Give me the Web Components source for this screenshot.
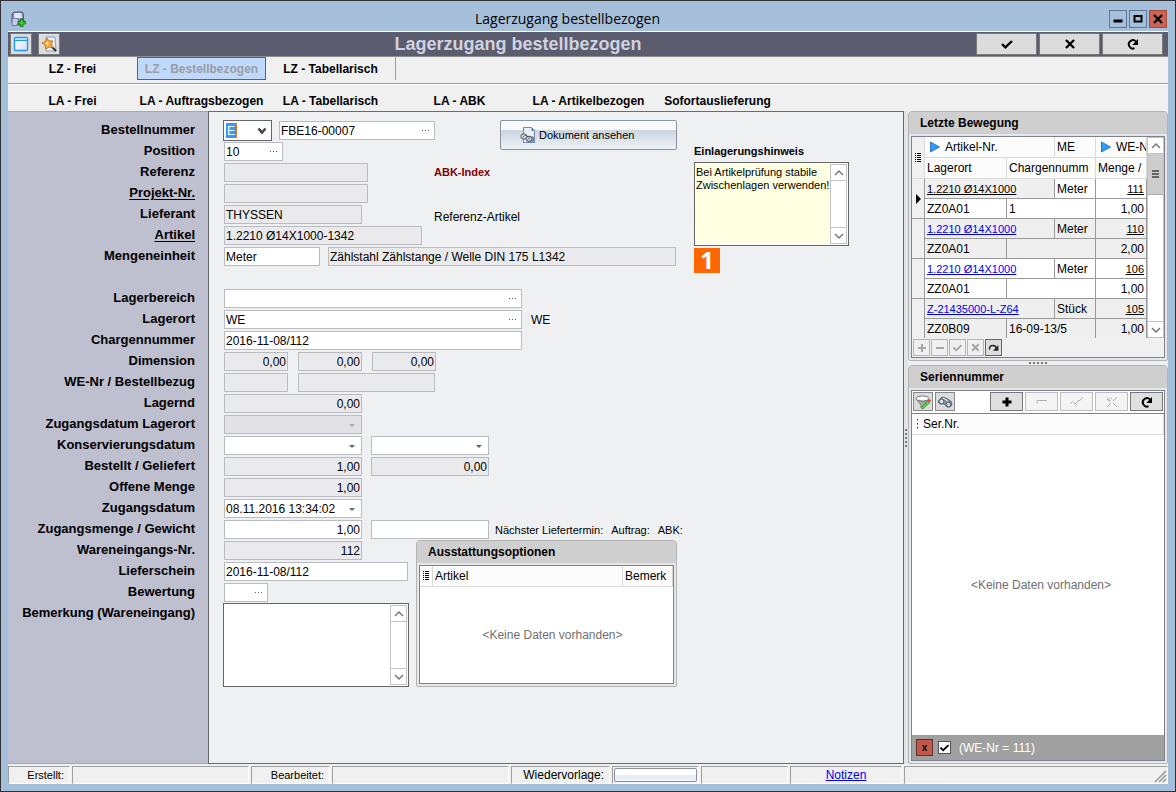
<!DOCTYPE html>
<html lang="de">
<head>
<meta charset="utf-8">
<title>Lagerzugang bestellbezogen</title>
<style>
html, body { margin: 0; height: 100%; }
body { font: 12px/16px "Liberation Sans", Arial, sans-serif; color: #000; }
</style>
</head>
<body>
<wz-window>
  <wz-titlebar></wz-titlebar>
  <wz-toolbar></wz-toolbar>
  <wz-tabs></wz-tabs>
  <wz-main></wz-main>
  <wz-status></wz-status>
</wz-window>

<script>
const base = `*{box-sizing:border-box}button,input,select,textarea{font:inherit;color:inherit;margin:0;padding:0;border:0;background:none;border-radius:0;outline:0}`;
function define(name, html) {
  customElements.define(name, class extends HTMLElement {
    connectedCallback() {
      if (this.shadowRoot) return;
      const root = this.attachShadow({ mode: 'open' });
      const t = document.createElement('template');
      t.innerHTML = typeof html === 'function' ? html(this) : html;
      root.append(t.content.cloneNode(true));
    }
  });
}

/* ---------- icons ---------- */
const icons = {
  app: `<path d="M2 3l2-2h8l1 1 1 9-2 3H4l-2-2z" fill="#8e94bd" stroke="#4f557c"/><path d="M4.500 2h7l.5 5H4z" fill="#e4e8fa"/><path d="M2 8q3-2 6 0l1 4-3 2.500H2z" fill="#c4c9e4" stroke="#666c94" stroke-width=".8"/><path d="M10.500 8h2.500v2.500h2.500v2.500h-2.500v2.500h-2.500v-2.500H8v-2.500h2.500z" fill="#3fd42c" stroke="#126a0e" stroke-width=".9"/>`,
  window: `<defs><linearGradient id="g" x2="1" y2="1"><stop offset="0" stop-color="#fff"/><stop offset="1" stop-color="#d9dcfa"/></linearGradient></defs><rect x="1.5" y="1.5" width="13" height="13" rx="1" fill="url(#g)" stroke="#1e9bf0" stroke-width="1.4"/><path d="M1 4.5h14" stroke="#1e9bf0"/><path d="M2 3h12" stroke="#a9dbfb" stroke-width="1.6"/>`,
  wizard: `<path d="M5 1h9l1 14H5z" fill="#e6edfb" stroke="#8d9cc4"/><path d="M9 9l6 6" stroke="#333" stroke-width="2"/><path d="M6 2l2 3 4 0-2 3 2 4-4-1-3 2-1-4-3-2 4-2z" fill="#f5b13c" stroke="#c46f10" stroke-width=".9"/><path d="M6 5.500l1.500 1.500-1 2-1.500-1z" fill="#fff2b0"/>`,
  check: `<path d="M3 8l3.4 3.4L13 5" fill="none" stroke="currentColor" stroke-width="2.2"/>`,
  cross: `<path d="M4 4l8 8M12 4l-8 8" fill="none" stroke="currentColor" stroke-width="2.3"/>`,
  redo: `<path d="M9.5 12.3A4.2 4.2 0 1 1 11 5.4" fill="none" stroke="currentColor" stroke-width="2"/><path d="M13 3v6H7.400z" fill="currentColor"/>`,
  redo2: `<path d="M3 10.500Q3 5.500 7 5.500T11.500 9" fill="none" stroke="currentColor" stroke-width="1.800"/><path d="M14 5v7H7.500z" fill="currentColor"/>`,
  plus: `<path d="M8 3.500v9M3.500 8h9" stroke="currentColor" stroke-width="3"/>`,
  plusthin: `<path d="M8 4v8M4 8h8" stroke="currentColor" stroke-width="2"/>`,
  minus: `<path d="M4 8h8" stroke="currentColor" stroke-width="2"/>`,
  minusbox: `<path d="M3 9.500v-3h10" fill="none" stroke="currentColor"/>`,
  checkthin: `<path d="M1.500 9.500l2-2 2.500 2.500 2-2M8 8l2-2M10 7l4-3.500M6 12l2-1.500" fill="none" stroke="currentColor"/>`,
  crossthin: `<path d="M3 3.500l3.500 3.500M9 9l4 4M13 3.500l-4 3.500M7 9l-4 4M3 5l3 3M6 3.500l2 2" fill="none" stroke="currentColor"/>`,
  min: `<path d="M3.500 10h9" stroke="#000" stroke-width="3"/>`,
  max: `<rect x="4.500" y="5" width="7" height="5.500" fill="none" stroke="#000" stroke-width="2"/>`,
  filter: `<path d="M1 5l5 6 0 3 3-1 0-3 5-5q-6 4-13 0z" fill="#a8a8a8" stroke="#666" stroke-width=".7"/><ellipse cx="7.500" cy="4.500" rx="6.500" ry="2.500" fill="#fff" stroke="#777"/><path d="M6 14l7-7 2 1.500-7 6.500z" fill="#62d33c" stroke="#2c8a18" stroke-width=".6"/><path d="M12.500 7l1.500-2 2 1.500-1.500 2z" fill="#e23c3c"/>`,
  glasses: `<path d="M2 6l3-3 4 1 5 3 1 4-2 2-3 0-3-3-4 0-2-2z" fill="#87929d" stroke="#59636d" stroke-width=".8"/><circle cx="4.500" cy="7.500" r="2.400" fill="#dfe8f0" stroke="#4f5a66"/><circle cx="11.500" cy="10.500" r="2.400" fill="#bcd3e6" stroke="#4f5a66"/><path d="M6 4l5 3" stroke="#e9eef2"/>`,
  doc: `<path d="M3.500.5h8l3 3.500v11.500h-11z" fill="#eaf1fc" stroke="#7388ad"/><path d="M11.500.5V4h3z" fill="#4f74b5"/><path d="M12 9l2 1v5H7z" fill="#8a8f99"/><ellipse cx="3.800" cy="9.500" rx="3" ry="2.600" fill="#dfe3e7" stroke="#4c545c"/><ellipse cx="9" cy="11.800" rx="3" ry="2.600" fill="#cfd8df" stroke="#4c545c"/><path d="M2.500 10.500l2-2M8 12.500l2-2M5 8l4 2" stroke="#4c545c"/>`,
  play: `<path d="M3.500 3v10l9-5z" fill="#2f9df4" stroke="#1467b8" stroke-width=".8"/>`,
  up: `<path d="M4 10l4-4 4 4" fill="none" stroke="currentColor" stroke-width="1.500"/>`,
  down: `<path d="M4 6l4 4 4-4" fill="none" stroke="currentColor" stroke-width="1.500"/>`,
  chevron: `<path d="M4.500 5.500L8 9.500l3.500-4" fill="none" stroke="#444" stroke-width="2.500"/>`,
  dots: `<path d="M5 7.500h1M8 7.500h1M11 7.500h1" stroke="#555"/>`,
  tri: `<path d="M5 7h6L8 10z" fill="currentColor"/>`,
  marker: `<path d="M6 3v10l5-5z" fill="#000"/>`,
  list: `<path d="M5 3.500h1M5 5.500h1M5 7.500h1M5 9.500h1M5 11.500h1M7 3.500h4M7 5.500h4M7 7.500h4M7 9.500h4M7 11.500h4" stroke="#000"/>`,
  vdots: `<path d="M7.500 3v1.500M7.500 7v1.500M7.500 11v1.500" stroke="#333"/>`,
  grip: `<path d="M4 15L15 4M8 15l7-7M12 15l3-3" stroke="#999" stroke-width="1.500"/>`
};
define('wz-icon', el => `<style>:host{display:block;flex:none;width:16px;height:16px}:host([size="13"]){width:13px;height:13px}:host([narrow]){width:12px}svg{display:block;width:100%;height:100%}</style>
<svg viewBox="${el.hasAttribute('narrow') ? '2 0 12 16' : '0 0 16 16'}" aria-hidden="true">${icons[el.getAttribute('name')]}</svg>`);

/* ---------- frame ---------- */
define('wz-window', `<style>
:host{display:flex;flex-direction:column;box-sizing:border-box;min-height:100vh;border:1px solid #333;background:#a6c0dc;padding:0 7px 7px}
</style><slot></slot>`);

define('wz-titlebar', `<style>${base}
:host{display:flex;align-items:center;height:30px;padding:0 1px 0 2px;font:14px/20px "Open Sans","Noto Sans",sans-serif}
.t{flex:1;text-align:center;padding-top:6px}
.ic{margin-top:6px}
.b{display:flex;gap:2px;padding-top:6px}
button{width:18px;height:18px;border:1px solid #5f7796;display:grid;place-items:center}
.x{background:#cb6454;border-color:#a84838}
</style>
<wz-icon class="ic" name="app"></wz-icon><div class="t">Lagerzugang bestellbezogen</div>
<div class="b"><button aria-label="Minimieren"><wz-icon name="min"></wz-icon></button><button aria-label="Maximieren"><wz-icon name="max"></wz-icon></button><button class="x" aria-label="Schließen"><wz-icon name="cross"></wz-icon></button></div>`);

define('wz-toolbar', `<style>${base}
:host{display:flex;align-items:center;gap:6px;box-sizing:border-box;height:26px;padding:0 5px 0 2px;border-top:1px solid #fff;border-bottom:1px solid #8e8e8e;background:#5b5d6e}
h1{flex:1;margin:0;text-align:center;font:bold 18px/22px "Liberation Sans",Arial,sans-serif;color:#cfd2e0}
button{width:22px;height:22px;background:#dcdcdc;border:1px solid #7b7b7b;display:grid;place-items:center}
.r{display:flex;gap:2px}.r button{width:61px}
</style>
<button aria-label="Fenster"><wz-icon name="window"></wz-icon></button><button aria-label="Assistent"><wz-icon name="wizard"></wz-icon></button>
<h1>Lagerzugang bestellbezogen</h1>
<div class="r"><button aria-label="Speichern"><wz-icon name="check"></wz-icon></button><button aria-label="Abbrechen"><wz-icon name="cross"></wz-icon></button><button aria-label="Aktualisieren"><wz-icon name="redo"></wz-icon></button></div>`);

define('wz-tabs', `<style>${base}
:host{display:block;background:#f0f0f0}
nav{display:flex;height:27px}
.a{border-bottom:1px solid #a0a0a0}
.b{border-top:1px solid #fff;padding-top:4px}
button{width:129px;height:23px;font-weight:bold;white-space:nowrap}
.sel{background:#bfd9fd;border:1px solid #3a6a96;color:#9a9da3}
.sep{width:1px;height:23px;background:#a0a0a0}
</style>
<nav class="a"><button>LZ - Frei</button><button class="sel">LZ - Bestellbezogen</button><button>LZ - Tabellarisch</button><span class="sep"></span></nav>
<nav class="b"><button>LA - Frei</button><button>LA - Auftragsbezogen</button><button>LA - Tabellarisch</button><button>LA - ABK</button><button>LA - Artikelbezogen</button><button>Sofortauslieferung</button></nav>`);

/* ---------- shared pieces ---------- */
define('wz-scrollbar', el => `<style>${base}
:host{display:flex;flex-direction:column;flex:none;width:17px;background:#fff;border:1px solid #c3c3c3;box-sizing:border-box;color:#777}
button{height:16px;display:grid;place-items:center;border-bottom:1px solid #c3c3c3}
button:last-child{border-bottom:0;border-top:1px solid #c3c3c3}
.track{flex:1}
.thumb{height:41px;background:#cdcdcd;border-bottom:1px solid #aaa;display:grid;place-items:center}
.thumb i{width:7px;height:8px;background:repeating-linear-gradient(#666 0 2px,transparent 2px 3px)}
</style><button aria-label="Nach oben"><wz-icon name="up"></wz-icon></button><div class="track">${el.hasAttribute('thumb') ? '<div class="thumb"><i></i></div>' : ''}</div><button aria-label="Nach unten"><wz-icon name="down"></wz-icon></button>`);

define('wz-panel', el => `<style>${base}
:host{display:flex;flex-direction:column;box-sizing:border-box;min-width:0;border:1px solid #b4b4b4;border-radius:4px 4px 2px 2px;background:#e6e7ea;overflow:hidden}
h2{margin:0;height:22px;padding:0 11px;font:bold 12px/22px "Liberation Sans",Arial,sans-serif;background:#cfcfcf}
.body{flex:1;display:flex;flex-direction:column;padding:2px}
</style><h2>${el.getAttribute('heading')}</h2><div class="body"><slot></slot></div>`);

const fieldCss = `
.f{display:flex;flex:none;height:19px;border:1px solid #b9bcc3;background:#fff;overflow:hidden}
.f input{flex:1;width:0;min-width:0;height:17px;padding:0 2px 0 1px}
.f button{width:17px;height:17px;color:#666;flex:none}
.f.ro{background:#eaeaec}.f.off{background:#e2e1e6}.f.off button{color:#aaa}
.num input{text-align:right;padding-right:1px}`;
function field(el, label, id) {
  const kind = el.getAttribute('kind') || '';
  const btn = kind.includes('look') ? 'dots' : kind.includes('date') ? 'tri' : '';
  return `<div class="f ${kind}" style="width:${el.getAttribute('w')}px"><input ${id ? `id="${id}"` : `aria-label="${label}"`} value="${el.getAttribute('value') || ''}" ${/ro|off/.test(kind) ? 'readonly' : ''}>${btn ? `<button aria-label="Auswahl"><wz-icon name="${btn}"></wz-icon></button>` : ''}</div>`;
}
define('wz-input', el => `<style>${base}:host{display:block}${fieldCss}</style>${field(el, el.getAttribute('label'))}`);

define('wz-row', el => {
  const own = el.hasAttribute('w'), text = el.getAttribute('label');
  let control = own ? field(el, '', 'f') : '';
  if (el.hasAttribute('combo')) control = `<div class="combo"><select id="f"><option>E</option></select><wz-icon name="chevron"></wz-icon></div>`;
  if (el.hasAttribute('memo')) control = `<div class="memo"><textarea id="f"></textarea><wz-scrollbar></wz-scrollbar></div>`;
  return `<style>${base}:host{display:contents}${fieldCss}
label{grid-column:1;grid-row:${el.getAttribute('row')};margin-right:28px;text-align:right;font-weight:bold;font-size:13px;line-height:20px;white-space:nowrap}
label a{color:inherit;text-underline-offset:2px}
.cell{grid-column:2/5;grid-row:${el.getAttribute('row')};display:flex;align-items:center;gap:${el.getAttribute('gap') || 9}px;padding-left:1px}
.flush{padding-left:0}
.combo{display:flex;width:49px;height:21px;border:1px solid #666;background:#fff;align-items:center;padding:0 1px}
.combo select{appearance:none;flex:1;width:0;height:17px;padding-left:2px;color:#fff;background:linear-gradient(#3399ff,#3399ff) 1px 1px/10px 15px no-repeat,linear-gradient(#d27a28,#d27a28) 11px 1px/1px 15px no-repeat}
.memo{display:flex;width:186px;height:84px;border:1px solid #666;background:#fff;padding:1px}
textarea{flex:1;width:0;resize:none;overflow:hidden}
</style><label for="f">${el.hasAttribute('link') ? `<a href="#">${text}</a>` : text}</label>
<div class="cell ${el.hasAttribute('combo') || el.hasAttribute('memo') ? 'flush' : ''}">${control}<slot></slot></div>`;
});

define('wz-note', `<style>${base}
:host{display:flex;flex-direction:column;align-items:flex-start}
label{font:bold 11px/21px "Liberation Sans",Arial,sans-serif}
.box{display:flex;width:155px;height:84px;border:1px solid #666;background:#fff;padding:1px}
textarea{flex:1;width:0;background:#ffffe1;resize:none;overflow:hidden;font-size:11px;line-height:13px;padding:2px 0 0;white-space:pre}
b{display:block;margin-top:2px;width:26px;height:25px;background:#ff6600;color:#fff;font:bold 24px/24px "Open Sans",sans-serif;text-align:center}
</style><label for="n">Einlagerungshinweis</label>
<div class="box"><textarea id="n">Bei Artikelprüfung stabile
Zwischenlagen verwenden!</textarea><wz-scrollbar></wz-scrollbar></div><b>1</b>`);

const tableCss = `
table{border-collapse:separate;border-spacing:0;table-layout:fixed;width:100%}
th,td{padding:0 2px;font-weight:normal;text-align:left;white-space:nowrap;overflow:hidden;height:20px;line-height:18px;border-right:1px solid #9a9a9a;border-bottom:1px solid #9a9a9a}
th{height:21px;background:#fcfcfc;border-color:#dadada}
th:first-child{padding:0}
.none{display:grid;place-items:center;flex:1;color:#6f6f6f}`;

define('wz-options', `<style>${base}
:host{display:flex;flex-direction:column;flex:1;border:1px solid #7f828c;background:#fff}${tableCss}
.i{width:13px}.m{width:50px}
.none{padding-left:12px}
</style><table><tr><th class="i"><wz-icon name="list" narrow></wz-icon></th><th>Artikel</th><th class="m">Bemerk</th></tr></table><div class="none">&lt;Keine Daten vorhanden&gt;</div>`);

define('wz-form', `<style>${base}
:host{display:grid;flex:1;min-width:0;align-content:start;box-sizing:border-box;padding-top:9px;
grid-template-columns:215px 193px 18px 243px 17px 1fr;grid-template-rows:repeat(23,21px) 84px;
border-right:1px solid #6b6b6b;
background:linear-gradient(to right,#a5a6b3 200px,#6b6b6b 200px) top/100% 1px no-repeat,linear-gradient(to right,#a5a6b3 200px,#6b6b6b 200px) bottom/100% 1px no-repeat,linear-gradient(to right,#bebfcf 200px,#6b6b6b 200px 201px,#eff0f2 201px)}
.doc{grid-column:4;grid-row:1/3;justify-self:end;width:177px;height:30px;padding:0 40px 0 19px;border:1px solid #8a93a3;border-radius:2px;background:linear-gradient(#f7f9fb 0 33%,#ccd5df 34%,#eef2f6);font-size:11px;display:flex;align-items:center;gap:3px;white-space:nowrap}
.abk{grid-column:4;grid-row:3;font:bold 11px/21px "Liberation Sans",Arial,sans-serif;color:#800000}
.ref{grid-column:4;grid-row:5;line-height:26px}
wz-note{grid-column:6;grid-row:2/9}
wz-panel{grid-column:3/5;grid-row:21/25}
.next{display:flex;gap:8px;margin-left:-3px;font-size:11px;white-space:nowrap}
</style>
<wz-row row="1" label="Bestellnummer" combo gap="7"><wz-input w="156" value="FBE16-00007" kind="look" label="Bestellnummer Wert"></wz-input></wz-row>
<wz-row row="2" label="Position" w="59" value="10" kind="look"></wz-row>
<wz-row row="3" label="Referenz" w="144" kind="ro"></wz-row>
<wz-row row="4" label="Projekt-Nr." link w="144" kind="ro"></wz-row>
<wz-row row="5" label="Lieferant" w="138" value="THYSSEN" kind="ro"></wz-row>
<wz-row row="6" label="Artikel" link w="198" value="1.2210 Ø14X1000-1342" kind="ro"></wz-row>
<wz-row row="7" label="Mengeneinheit" w="96" value="Meter" gap="8"><wz-input w="348" value="Zählstahl Zählstange / Welle DIN 175 L1342" kind="ro" label="Bezeichnung"></wz-input></wz-row>
<wz-row row="9" label="Lagerbereich" w="298" kind="look"></wz-row>
<wz-row row="10" label="Lagerort" w="298" value="WE" kind="look"><span>WE</span></wz-row>
<wz-row row="11" label="Chargennummer" w="298" value="2016-11-08/112"></wz-row>
<wz-row row="12" label="Dimension" w="64" value="0,00" kind="ro num" gap="10"><wz-input w="64" value="0,00" kind="ro num" label="Dimension 2"></wz-input><wz-input w="64" value="0,00" kind="ro num" label="Dimension 3"></wz-input></wz-row>
<wz-row row="13" label="WE-Nr / Bestellbezug" w="64" kind="ro" gap="10"><wz-input w="137" kind="ro" label="Bestellbezug"></wz-input></wz-row>
<wz-row row="14" label="Lagernd" w="138" value="0,00" kind="ro num"></wz-row>
<wz-row row="15" label="Zugangsdatum Lagerort" w="138" kind="off date"></wz-row>
<wz-row row="16" label="Konservierungsdatum" w="138" kind="date"><wz-input w="118" kind="date" label="Konservierungsdatum bis"></wz-input></wz-row>
<wz-row row="17" label="Bestellt / Geliefert" w="138" value="1,00" kind="ro num"><wz-input w="118" value="0,00" kind="ro num" label="Geliefert"></wz-input></wz-row>
<wz-row row="18" label="Offene Menge" w="138" value="1,00" kind="ro num"></wz-row>
<wz-row row="19" label="Zugangsdatum" w="138" value="08.11.2016 13:34:02" kind="date"></wz-row>
<wz-row row="20" label="Zugangsmenge / Gewicht" w="138" value="1,00" kind="num"><wz-input w="118" label="Gewicht"></wz-input><span class="next"><span>Nächster Liefertermin:</span><span>Auftrag:</span><span>ABK:</span></span></wz-row>
<wz-row row="21" label="Wareneingangs-Nr." w="138" value="112" kind="ro num"></wz-row>
<wz-row row="22" label="Lieferschein" w="184" value="2016-11-08/112"></wz-row>
<wz-row row="23" label="Bewertung" w="44" kind="look"></wz-row>
<wz-row row="24" label="Bemerkung (Wareneingang)" memo></wz-row>
<button class="doc"><wz-icon name="doc"></wz-icon>Dokument ansehen</button>
<span class="abk">ABK-Index</span><span class="ref">Referenz-Artikel</span>
<wz-note></wz-note>
<wz-panel heading="Ausstattungsoptionen"><wz-options></wz-options></wz-panel>`);

/* ---------- right column ---------- */
const moves = [
  ['1.2210 Ø14X1000', 'Meter', '111', 'ZZ0A01', '1', '1,00'],
  ['1.2210 Ø14X1000', 'Meter', '110', 'ZZ0A01', '', '2,00'],
  ['1.2210 Ø14X1000', 'Meter', '106', 'ZZ0A01', '', '1,00'],
  ['Z-21435000-L-Z64', 'Stück', '105', 'ZZ0B09', '16-09-13/5', '1,00']
];
define('wz-moves', `<style>${base}
:host{display:block;border:1px solid #7f828c;background:#f0f0f0}${tableCss}
.view{display:flex;height:201px;overflow:hidden}
.tw{flex:1;min-width:0;overflow:hidden}
tr.o td{background:#efefef}tr.e td{background:#fff}
tr td.i,th.i{padding:0;background:#f0f0f0}
td.n{text-align:right}
a{font-size:11px;color:#0000ee;text-underline-offset:1px}
tr.cur a,.n a{color:#000}
tr.cur td.c{background:#efefef}
tr th.l{padding:0 2px}
th div{display:flex;align-items:center;gap:2px}
.nav{display:flex;gap:1px;height:19px;padding:0 1px;align-items:center;color:#a5a5a5}
.nav button{width:17px;height:17px;border:1px solid #b5b5b5;display:grid;place-items:center}
.nav .on{border-color:#666;background:#ddd;color:#222}
</style>
<div class="view"><div class="tw"><table>
<colgroup><col style="width:13px"><col style="width:82px"><col style="width:48px"><col style="width:41px"><col></colgroup>
<thead><tr><th class="i" rowspan="2"><wz-icon name="list" narrow></wz-icon></th><th colspan="2"><div><wz-icon name="play"></wz-icon>Artikel-Nr.</div></th><th>ME</th><th><div><wz-icon name="play"></wz-icon>WE-N</div></th></tr>
<tr><th class="l">Lagerort</th><th colspan="2">Chargennumm</th><th>Menge /</th></tr></thead>
<tbody>${moves.map((m, i) => {
  const c = i % 2 ? 'o' : 'e';
  return `<tr class="${c} ${i ? '' : 'cur'}"><td class="i" rowspan="2">${i ? '' : '<wz-icon name="marker" narrow></wz-icon>'}</td><td class="c" colspan="2"><a href="#">${m[0]}</a></td><td>${m[1]}</td><td class="n"><a href="#">${m[2]}</a></td></tr><tr class="${c}"><td>${m[3]}</td><td colspan="2">${m[4]}</td><td class="n">${m[5]}</td></tr>`;
}).join('')}</tbody></table></div><wz-scrollbar thumb></wz-scrollbar></div>
<div class="nav"><button aria-label="Neu"><wz-icon name="plusthin"></wz-icon></button><button aria-label="Löschen"><wz-icon name="minus"></wz-icon></button><button aria-label="Übernehmen"><wz-icon name="check" size="13"></wz-icon></button><button aria-label="Verwerfen"><wz-icon name="cross" size="13"></wz-icon></button><button class="on" aria-label="Aktualisieren"><wz-icon name="redo2" size="13"></wz-icon></button></div>`);

define('wz-serials', `<style>${base}
:host{display:flex;flex-direction:column;flex:1;border:1px solid #7f828c;background:#fff}${tableCss}
.bar{display:flex;gap:2px;height:23px;padding:1px 1px 0;border-bottom:1px solid #7f828c;color:#b0b0b0}
.bar button{width:33px;height:19px;border:1px solid #bcbcbc;display:grid;place-items:center;background:#f4f4f4}
.bar .on{border-color:#777;background:#dfdfdf;color:#000}
.bar .s{width:20px;border-color:#888;background:#dcdcdc}
.gap{flex:1}
.none{padding-left:6px}
.foot{display:flex;align-items:center;height:25px;background:#a0a0a0;padding:0 4px;gap:5px;color:#fff}
.foot button{width:17px;height:17px;background:#c2574c;border:1px solid #5e3030;color:#000;font:bold 10px/12px "Liberation Sans",sans-serif}
label{display:flex;align-items:center;gap:8px}
input{appearance:none;width:13px;height:13px;background:#fff;border:1px solid #555}
.cb{display:grid}.cb>*{grid-area:1/1}.cb wz-icon{color:#000;pointer-events:none}
th{padding:0 1px}
tr th:first-child{border-right:0}
</style>
<div class="bar"><button class="s" aria-label="Filter"><wz-icon name="filter"></wz-icon></button><button class="s" aria-label="Suchen"><wz-icon name="glasses"></wz-icon></button><span class="gap"></span><button class="on" aria-label="Neu"><wz-icon name="plus"></wz-icon></button><button aria-label="Löschen"><wz-icon name="minusbox"></wz-icon></button><button aria-label="Übernehmen"><wz-icon name="checkthin"></wz-icon></button><button aria-label="Verwerfen"><wz-icon name="crossthin"></wz-icon></button><button class="on" aria-label="Aktualisieren"><wz-icon name="redo"></wz-icon></button></div>
<table><colgroup><col style="width:10px"><col></colgroup><tr><th><wz-icon name="vdots" narrow></wz-icon></th><th>Ser.Nr.</th></tr></table>
<div class="none">&lt;Keine Daten vorhanden&gt;</div>
<div class="foot"><button aria-label="Filter löschen">x</button><label><span class="cb"><input type="checkbox" checked><wz-icon name="check" size="13"></wz-icon></span>(WE-Nr = 111)</label></div>`);

define('wz-main', `<style>${base}
:host{display:flex;flex:1;background:#eff0f2}
.v{width:4px;display:grid;place-items:center;background:#e3e4e8}
.v i{width:2px;height:18px;background:repeating-linear-gradient(#777 0 2px,transparent 2px 4px)}
.h{height:4px;display:grid;place-items:center}
.h i{width:18px;height:2px;background:repeating-linear-gradient(to right,#777 0 2px,transparent 2px 4px)}
aside{width:260px;flex:none;display:flex;flex-direction:column}
.grow{flex:1}
</style><wz-form></wz-form><div class="v"><i></i></div>
<aside><wz-panel heading="Letzte Bewegung"><wz-moves></wz-moves></wz-panel><div class="h"><i></i></div><wz-panel class="grow" heading="Seriennummer"><wz-serials></wz-serials></wz-panel></aside>`);

define('wz-status', `<style>${base}
:host{display:flex;gap:2px;height:20px;padding-top:2px;background:#f0f0f0;box-sizing:border-box}
div{height:18px;border:1px solid #a0a0a0;border-right-color:#fff;border-bottom-color:#fff;padding:0 5px;line-height:17px;text-align:right;flex:none;white-space:nowrap}
.s{font-size:11px}
a{color:#0000ee}
button{display:block;width:83px;height:14px;border:1px solid #8a93a3;border-radius:2px;background:linear-gradient(#fff 0 50%,#e2e8ee 55%,#f2f5f8)}
</style>
<div class="s" style="width:62px">Erstellt:</div><div style="width:177px"></div><div class="s" style="width:79px">Bearbeitet:</div><div style="width:177px"></div><div style="width:99px">Wiedervorlage:</div><div style="width:87px;padding:1px"><button aria-label="Wiedervorlage wählen"></button></div><div style="width:87px"></div><div style="width:112px;text-align:center"><a href="#">Notizen</a></div><div style="flex:1;padding:0;display:flex;justify-content:flex-end"><wz-icon name="grip"></wz-icon></div>`);
</script>
</body>
</html>
